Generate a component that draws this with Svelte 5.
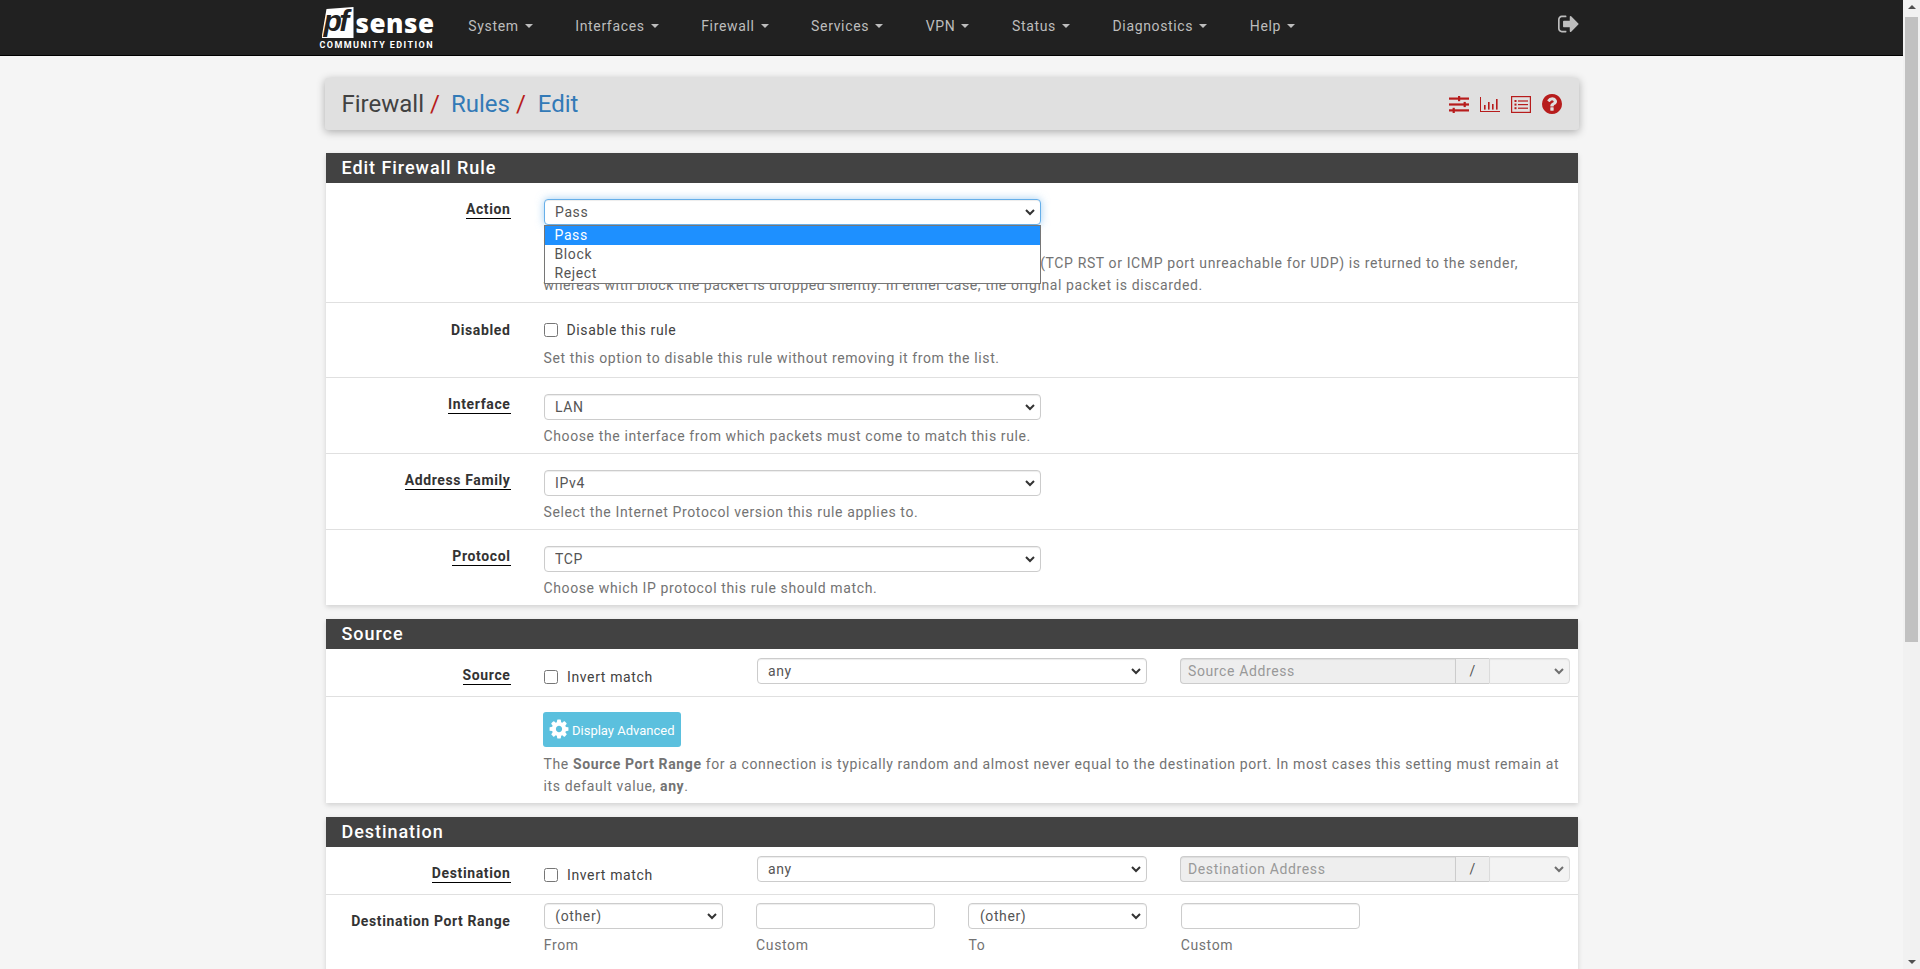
<script>
  const nav = ['System','Interfaces','Firewall','Services','VPN','Status','Diagnostics','Help'];
  const cog = "M1152 896q0-106-75-181t-181-75-181 75-75 181 75 181 181 75 181-75 75-181zm512-109v222q0 12-8 23t-20 13l-185 28q-19 54-39 91 35 50 107 138 10 12 10 25t-9 23q-27 37-99 108t-94 71q-12 0-26-9l-138-108q-44 23-91 38-16 136-29 186-7 28-36 28h-222q-14 0-24.5-8.5t-11.5-21.5l-28-184q-49-16-90-37l-141 107q-10 9-25 9-14 0-25-11-126-114-165-168-7-10-7-23 0-12 8-23 15-21 51-66.5t54-70.5q-27-50-41-99l-183-27q-13-2-21-12.5t-8-23.5v-222q0-12 8-23t19-13l186-28q14-46 39-92-40-57-107-138-10-12-10-24 0-10 9-23 26-36 98.5-107.5t94.5-71.5q13 0 26 10l138 107q44-23 91-38 16-136 29-186 7-28 36-28h222q14 0 24.5 8.5t11.5 21.5l28 184q49 16 90 37l142-107q9-9 24-9 13 0 25 10 129 119 165 170 7 8 7 22 0 12-8 23-15 21-51 66.5t-54 70.5q26 50 41 98l183 28q13 2 21 12.5t8 23.5z";
  const help = "M1024 1376v-192q0-14-9-23t-23-9h-192q-14 0-23 9t-9 23v192q0 14 9 23t23 9h192q14 0 23-9t9-23zm256-672q0-88-55.5-163t-138.5-116-170-41q-243 0-371 213-15 24 8 42l132 100q7 6 19 6 16 0 25-12 53-68 86-92 34-24 86-24 48 0 85.5 26t37.5 59q0 38-20 61t-68 45q-63 28-115.5 86.5t-52.5 125.5v36q0 14 9 23t23 9h192q14 0 23-9t9-23q0-19 21.5-49.5t54.5-49.5q32-18 49-28.5t46-35 44.5-48 28-60.5 12.5-81zm384 192q0 209-103 385.5t-279.5 279.5-385.5 103-385.5-103-279.5-279.5-103-385.5 103-385.5 279.5-279.5 385.5-103 385.5 103 279.5 279.5 103 385.5z";
  const signout = "M704 1440q0 4 1 20t.5 26.5-3 23.5-10 19.5-20.5 6.5h-320q-119 0-203.5-84.5t-84.5-203.5v-704q0-119 84.5-203.5t203.5-84.5h320q13 0 22.5 9.5t9.5 22.5q0 4 1 20t.5 26.5-3 23.5-10 19.5-20.5 6.5h-320q-66 0-113 47t-47 113v704q0 66 47 113t113 47h312l11.5 1 11.5 3 8 5.5 7 9 2 13.5zm928-544q0 26-19 45l-544 544q-19 19-45 19t-45-19-19-45v-288h-448q-26 0-45-19t-19-45v-384q0-26 19-45t45-19h448v-288q0-26 19-45t45-19 45 19l544 544q19 19 19 45z";
</script>

<div class="shell">
  <div class="page">
    <header class="navbar">
      <div class="navin">
        <div class="logo">
          <div class="logotop">
            <span class="pf">pf</span><span class="sense">sense</span>
          </div>
          <div class="ce">COMMUNITY EDITION</div>
        </div>
        <nav class="menu">
          {#each nav as n}
            <span class="item">{n}<i class="caret"></i></span>
          {/each}
        </nav>
        <svg class="logout" viewBox="64 224 1600 1344"><path fill="#bdbdbd" d={signout}/></svg>
      </div>
    </header>

    <main class="content">
      <div class="crumbs">
        <h1><span>Firewall</span><em>/</em><a href="#r">Rules</a><em>/</em><a href="#e">Edit</a></h1>
        <div class="tools">
          <svg viewBox="0 0 20 17" class="t1"><g fill="#b71c1c"><rect x="0" y="1.5" width="20" height="2.2"/><rect x="0" y="7.4" width="20" height="2.2"/><rect x="0" y="13.3" width="20" height="2.2"/><rect x="9" y="0" width="2.2" height="5.2"/><rect x="14.6" y="5.9" width="2.2" height="5.2"/><rect x="3.6" y="11.8" width="2.2" height="5.2"/></g></svg>
          <svg viewBox="0 0 20 15" class="t2"><g fill="#b71c1c"><rect x="0" y="0" width="1" height="15"/><rect x="0" y="14" width="20" height="1"/><rect x="4" y="8" width="1.6" height="4.6"/><rect x="8" y="5" width="1.6" height="7.6"/><rect x="12" y="7" width="1.6" height="5.6"/><rect x="16" y="2" width="1.6" height="10.6"/></g></svg>
          <svg viewBox="0 0 20 17" class="t3"><rect x=".6" y=".6" width="18.8" height="15.8" fill="none" stroke="#b71c1c" stroke-width="1.2"/><g fill="#b71c1c"><rect x="3.5" y="4" width="2" height="2"/><rect x="3.5" y="7.6" width="2" height="2"/><rect x="3.5" y="11.2" width="2" height="2"/><rect x="7" y="4.4" width="10" height="1.2"/><rect x="7" y="8" width="10" height="1.2"/><rect x="7" y="11.6" width="10" height="1.2"/></g></svg>
          <svg viewBox="128 128 1536 1536" class="t4"><path fill="#b71c1c" d={help}/></svg>
        </div>
      </div>

      <section class="panel first">
        <h2>Edit Firewall Rule</h2>
        <div class="row action">
          <label class="lbl req" for="a">Action</label>
          <div class="ctl">
            <div class="dropwrap">
              <select id="a" class="wide focus"><option>Pass</option><option>Block</option><option>Reject</option></select>
              <ul class="dropdown">
                <li class="sel">Pass</li>
                <li>Block</li>
                <li>Reject</li>
              </ul>
            </div>
            <p class="help">Choose what to do with packets that match the criteria specified below.<br>Hint: the difference between block and reject is that with reject, a packet (TCP RST or ICMP port unreachable for UDP) is returned to the sender, whereas with block the packet is dropped silently. In either case, the original packet is discarded.</p>
          </div>
        </div>
        <div class="row disabled">
          <span class="lbl">Disabled</span>
          <div class="ctl">
            <label class="check"><input type="checkbox"> Disable this rule</label>
            <p class="help">Set this option to disable this rule without removing it from the list.</p>
          </div>
        </div>
        <div class="row sel-row">
          <label class="lbl req" for="i">Interface</label>
          <div class="ctl">
            <select id="i" class="wide"><option>LAN</option></select>
            <p class="help">Choose the interface from which packets must come to match this rule.</p>
          </div>
        </div>
        <div class="row sel-row">
          <label class="lbl req" for="f">Address Family</label>
          <div class="ctl">
            <select id="f" class="wide"><option>IPv4</option></select>
            <p class="help">Select the Internet Protocol version this rule applies to.</p>
          </div>
        </div>
        <div class="row sel-row last">
          <label class="lbl req" for="p">Protocol</label>
          <div class="ctl">
            <select id="p" class="wide"><option>TCP</option></select>
            <p class="help">Choose which IP protocol this rule should match.</p>
          </div>
        </div>
      </section>

      <section class="panel">
        <h2>Source</h2>
        <div class="row addr">
          <span class="lbl req">Source</span>
          <label class="check inv"><input type="checkbox"> Invert match</label>
          <select class="any"><option>any</option></select>
          <div class="group">
            <input class="ip" disabled placeholder="Source Address">
            <span class="slash">/</span>
            <select class="mask" disabled><option></option></select>
          </div>
        </div>
        <div class="row adv last">
          <span class="lbl"></span>
          <div class="ctl">
            <button class="info"><svg viewBox="0 0 1792 1792"><path fill="#fff" d={cog}/></svg>Display Advanced</button>
            <p class="help">The <b>Source Port Range</b> for a connection is typically random and almost never equal to the destination port. In most cases this setting must remain at its default value, <b>any</b>.</p>
          </div>
        </div>
      </section>

      <section class="panel">
        <h2>Destination</h2>
        <div class="row addr">
          <span class="lbl req">Destination</span>
          <label class="check inv"><input type="checkbox"> Invert match</label>
          <select class="any"><option>any</option></select>
          <div class="group">
            <input class="ip" disabled placeholder="Destination Address">
            <span class="slash">/</span>
            <select class="mask" disabled><option></option></select>
          </div>
        </div>
        <div class="row ports">
          <span class="lbl">Destination Port Range</span>
          <div class="port"><select><option>(other)</option></select><p class="help">From</p></div>
          <div class="port"><input><p class="help">Custom</p></div>
          <div class="port"><select><option>(other)</option></select><p class="help">To</p></div>
          <div class="port"><input><p class="help">Custom</p></div>
        </div>
      </section>
    </main>
  </div>

  <aside class="scrollbar">
    <i class="up"></i>
    <div class="thumb"></div>
    <i class="down"></i>
  </aside>
</div>

<style>
  :global(body) { margin: 0; background: #f5f5f5; }
  .shell { display: flex; height: 969px; overflow: hidden; font-family: Roboto, "Liberation Sans", sans-serif; font-size: 14px; letter-spacing: .62px; color: #424242; }
  .page { width: 1903px; flex: none; overflow: hidden; }
  .navbar { height: 55px; background: #212121; border-bottom: 1px solid #000; }
  .navin { width: 1254px; margin: 0 auto; height: 100%; display: flex; align-items: flex-start; position: relative; }
  .logo { width: 126.5px; flex: none; padding-top: 7px; margin-left: -4px; box-sizing: border-box; color: #fff; }
  .logotop { display: flex; align-items: center; height: 31px; padding-left: 1px; }
  .pf { display: block; flex: none; background: #fff; color: #212121; font: italic 700 30px/27px "Liberation Sans", sans-serif; width: 32px; height: 31px; padding-left: 2px; box-sizing: border-box; letter-spacing: -2.5px; clip-path: polygon(5px 2px, 32px 0, 32px 31px, 0 31px); overflow: hidden; }
  .sense { font: 800 26px/30px "Open Sans", sans-serif; margin-left: 2px; letter-spacing: .5px; }
  .ce { font: 700 9px/11px Roboto, sans-serif; letter-spacing: 1.42px; margin: 2px 0 0 -1px; white-space: nowrap; }
  .menu { display: flex; padding-top: 17px; }
  .item { color: #bdbdbd; line-height: 18px; padding: 0 21.3px; display: flex; align-items: center; letter-spacing: .65px; }
  .caret { display: inline-block; width: 0; height: 0; border: 4px solid transparent; border-top-color: #bdbdbd; border-bottom: 0; margin-left: 6px; }
  .logout { width: 21px; height: 18px; position: absolute; right: 0; top: 15px; }

  .content { width: 1252px; margin: 22px auto 0; }
  .crumbs { height: 52px; background: #e0e0e0; border-radius: 3px; margin: 0 -1px 23px; padding: 0 17px; display: flex; align-items: center; justify-content: space-between; box-shadow: 0 2px 8px rgba(0,0,0,.3); }
  h1 { margin: 0; font-size: 24px; font-weight: 400; color: #424242; display: flex; letter-spacing: 0; }
  h1 em { color: #b71c1c; font-style: normal; margin: 0 12px 0 6px; }
  h1 span + em { margin-right: 11px; }
  h1 a { color: #337ab7; text-decoration: none; }
  .tools { display: flex; align-items: center; gap: 11px; }
  .tools svg { display: block; }
  .t1, .t3 { width: 20px; height: 17px; }
  .t2 { width: 20px; height: 15px; }
  .t4 { width: 20px; height: 20px; }

  .panel { background: #fff; margin-bottom: 14px; box-shadow: 0 2px 5px rgba(0,0,0,.15); }
  h2 { margin: 0; height: 30px; line-height: 30px; background: #424242; color: #fff; font-size: 18px; font-weight: 500; padding-left: 16px; letter-spacing: .95px; }
  .row { display: grid; grid-template-columns: 185px 1fr; column-gap: 33px; border-bottom: 1px solid #e0e0e0; box-sizing: border-box; padding-right: 6px; }
  .row.last { border-bottom: 0; }
  .lbl { display: block; text-align: right; font-weight: 700; color: #333; line-height: 18px; justify-self: end; align-self: start; }
  .req { border-bottom: 1px solid #000; line-height: 17px; }
  .ctl { min-width: 0; padding-right: 10px; }
  select, input:not([type=checkbox]) { box-sizing: border-box; height: 26px; font: 14px Roboto, sans-serif; letter-spacing: .62px; color: #555; border: 1px solid #ccc; border-radius: 4px; background-color: #fff; box-shadow: inset 0 1px 1px rgba(0,0,0,.075); padding: 0 7px; display: block; }
  select { appearance: none; padding: 0 24px 0 10.5px; background-image: url("data:image/svg+xml,%3Csvg xmlns='http://www.w3.org/2000/svg' width='10' height='7'%3E%3Cpath d='M1 1l4 4 4-4' fill='none' stroke='%23333' stroke-width='2'/%3E%3C/svg%3E"); background-repeat: no-repeat; background-position: right 5px center; }
  .wide { width: 497px; }
  .focus { border-color: #66afe9; box-shadow: inset 0 1px 1px rgba(0,0,0,.075), 0 0 8px rgba(102,175,233,.6); }
  .help { margin: 0; color: #737373; line-height: 22px; }
  .help b { font-weight: 700; }

  .action { height: 120px; padding-top: 16px; }
  .action .lbl { margin-top: 2px; }
  .action .help { margin-top: 5px; }
  .dropwrap { position: relative; }
  .dropdown { position: absolute; z-index: 3; left: 0; top: 26px; width: 497px; box-sizing: border-box; margin: 0; padding: 0; list-style: none; background: #fff; border: 1px solid #767676; color: #555; }
  .dropdown li { height: 19px; line-height: 19px; padding-left: 10px; }
  .dropdown .sel { background: #1e90ff; color: #fff; }

  .disabled { height: 75px; padding-top: 18px; }
  .check { display: flex; align-items: center; line-height: 18px; color: #424242; }
  .check input { width: 14px; height: 14px; margin: 0 9px 0 0; flex: none; }
  .disabled .help { margin-top: 8px; }

  .sel-row { height: 76px; padding-top: 16px; }
  .sel-row .lbl { margin-top: 2px; }
  .sel-row .help { margin-top: 5px; }
  .sel-row.last { height: 75px; }

  .addr { height: 48px; grid-template-columns: 185px 179px 390px 390px; column-gap: 33.5px; padding-top: 9px; }
  .addr .lbl { margin-top: 9px; }
  .addr .inv { margin: -1px 0 0; }
  .any { width: 390px; }
  .group { display: flex; }
  .group .ip { width: 276px; background: #eee; border-radius: 4px 0 0 4px; border-right: 0; color: #999; }
  .group .ip::placeholder { color: #999; opacity: 1; }
  .slash { width: 34px; height: 26px; box-sizing: border-box; border: 1px solid #ccc; border-right: 0; background: #eee; text-align: center; line-height: 24px; color: #555; }
  .mask { width: 81px; background-color: #eee; border-radius: 0 4px 4px 0; }

  .adv { height: 106px; padding-top: 15px; }
  .info { display: flex; align-items: center; height: 35px; width: 138px; margin-left: -1px; box-sizing: border-box; background: #5bc0de; color: #fff; border: 0; border-radius: 3px; font: 13px Roboto, sans-serif; letter-spacing: 0; padding: 2px 0 0 6px; white-space: nowrap; }
  .info svg { width: 22px; height: 22px; margin: -4px 2.5px 0 -1px; flex: none; }
  .adv .help { margin-top: 6px; }

  .ports { grid-template-columns: 185px 179px 179px 179px 179px; column-gap: 33.3px; padding-top: 8px; height: 120px; border-bottom: 0; }
  .ports .lbl { margin-top: 9px; }
  .port select, .port input { width: 100%; }
  .port .help { margin-top: 5px; }

  .scrollbar { width: 17px; flex: none; background: #f1f1f1; position: relative; }
  .thumb { position: absolute; top: 17px; left: 2px; width: 13px; height: 625px; background: #c1c1c1; }
  .up, .down { position: absolute; left: 4.5px; width: 0; height: 0; border: 4px solid transparent; }
  .up { top: 5px; border-bottom-color: #505050; border-top: 0; }
  .down { bottom: 5px; border-top-color: #505050; border-bottom: 0; }
</style>
